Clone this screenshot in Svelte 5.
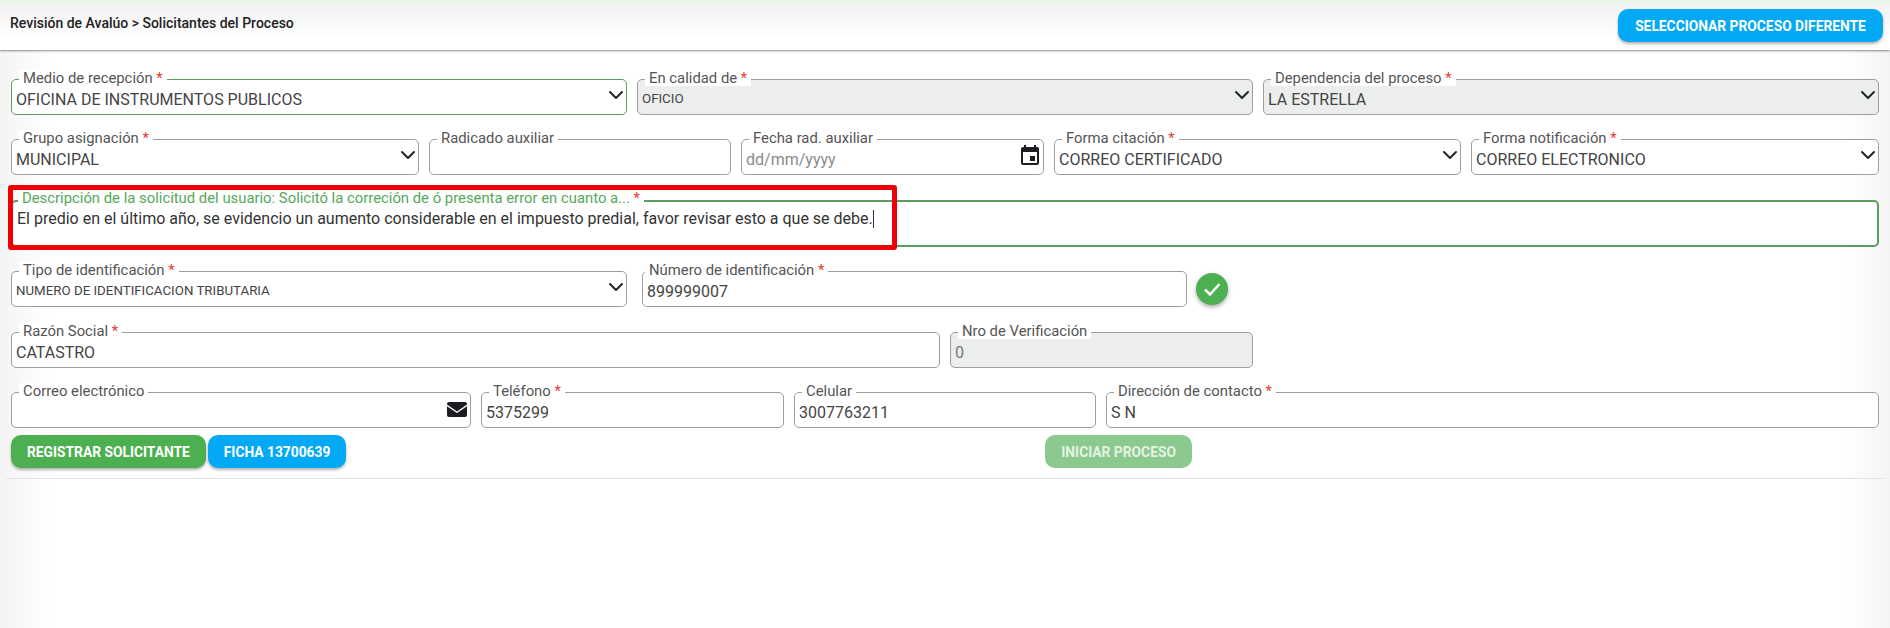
<script>
  const req = '*';
</script>

<div class="page">
  <header class="head">
    <h1>Revisión de Avalúo &gt; Solicitantes del Proceso</h1>
    <button class="btn blue top">SELECCIONAR PROCESO DIFERENTE</button>
  </header>

  <section class="form">
    <div class="row r1">
      <div class="field ok"><span class="lab">Medio de recepción <i>{req}</i></span><span class="val">OFICINA DE INSTRUMENTOS PUBLICOS</span><svg class="chev" viewBox="0 0 16 16"><path d="M2 5l6 6 6-6"/></svg></div>
      <div class="field off"><span class="lab">En calidad de <i>{req}</i></span><span class="val sm">OFICIO</span><svg class="chev" viewBox="0 0 16 16"><path d="M2 5l6 6 6-6"/></svg></div>
      <div class="field off"><span class="lab">Dependencia del proceso <i>{req}</i></span><span class="val">LA ESTRELLA</span><svg class="chev" viewBox="0 0 16 16"><path d="M2 5l6 6 6-6"/></svg></div>
    </div>
    <div class="row r2">
      <div class="field"><span class="lab">Grupo asignación <i>{req}</i></span><span class="val">MUNICIPAL</span><svg class="chev" viewBox="0 0 16 16"><path d="M2 5l6 6 6-6"/></svg></div>
      <div class="field"><span class="lab">Radicado auxiliar</span></div>
      <div class="field"><span class="lab">Fecha rad. auxiliar</span><span class="val ph">dd/mm/yyyy</span>
        <svg class="ico cal" viewBox="0 0 24 24"><path d="M17 12h-5v5h5v-5zM16 1v2H8V1H6v2H5c-1.110 0-1.990.9-1.990 2L3 19c0 1.100.89 2 2 2h14c1.100 0 2-.9 2-2V5c0-1.100-.9-2-2-2h-1V1h-2zm3 18H5V8h14v11z"/></svg></div>
      <div class="field"><span class="lab">Forma citación <i>{req}</i></span><span class="val">CORREO CERTIFICADO</span><svg class="chev" viewBox="0 0 16 16"><path d="M2 5l6 6 6-6"/></svg></div>
      <div class="field"><span class="lab">Forma notificación <i>{req}</i></span><span class="val">CORREO ELECTRONICO</span><svg class="chev" viewBox="0 0 16 16"><path d="M2 5l6 6 6-6"/></svg></div>
    </div>
    <div class="row r3">
      <div class="field ok area"><span class="lab lab-ok">Descripción de la solicitud del usuario: Solicitó la correción de ó presenta error en cuanto a... <i>{req}</i></span><span class="val">El predio en el último año, se evidencio un aumento considerable en el impuesto predial, favor revisar esto a que se debe.<b class="caret"></b></span>
        <div class="redbox"></div>
      </div>
    </div>
    <div class="row r4">
      <div class="field"><span class="lab">Tipo de identificación <i>{req}</i></span><span class="val sm">NUMERO DE IDENTIFICACION TRIBUTARIA</span><svg class="chev" viewBox="0 0 16 16"><path d="M2 5l6 6 6-6"/></svg></div>
      <div class="field"><span class="lab lab-near">Número de identificación <i>{req}</i></span><span class="val">899999007</span></div>
      <div class="check"><svg viewBox="0 0 32 32"><path d="M9 16.500l5 5 9.500-10.500"/></svg></div>
    </div>
    <div class="row r5">
      <div class="field"><span class="lab">Razón Social <i>{req}</i></span><span class="val">CATASTRO</span></div>
      <div class="field off"><span class="lab">Nro de Verificación</span><span class="val dim">0</span></div>
    </div>
    <div class="row r6">
      <div class="field"><span class="lab">Correo electrónico</span>
        <svg class="ico mail" viewBox="0 0 20 15"><path d="M2 0h16a2 2 0 0 1 2 2v.6l-10 6.800L0 2.600V2a2 2 0 0 1 2-2zM0 4.300l10 6.800 10-6.800V13a2 2 0 0 1-2 2H2a2 2 0 0 1-2-2z"/></svg></div>
      <div class="field"><span class="lab">Teléfono <i>{req}</i></span><span class="val">5375299</span></div>
      <div class="field"><span class="lab">Celular</span><span class="val">3007763211</span></div>
      <div class="field"><span class="lab">Dirección de contacto <i>{req}</i></span><span class="val">S N</span></div>
    </div>
    <div class="actions">
      <button class="btn green">REGISTRAR SOLICITANTE</button>
      <button class="btn blue">FICHA 13700639</button>
      <button class="btn start">INICIAR PROCESO</button>
    </div>
  </section>
  <hr />
</div>

<style>
  :global(body) { margin: 0; background: #fff; }
  .page {
    width: 1890px; height: 628px; overflow: hidden; box-sizing: border-box;
    font-family: Roboto, sans-serif; color: #333;
    background: linear-gradient(90deg, #f4f4f4 0, #fff 50px, #fff 1845px, #f4f4f4 100%);
  }
  .head {
    height: 50px; box-sizing: border-box; padding: 7px 7px 0 10px;
    display: flex; justify-content: space-between; align-items: flex-start;
    border-top: 2px solid #e6f4e6;
    background: linear-gradient(180deg, #f1f1f1, #fff 75%);
    box-shadow: 0 1px 2px rgba(0,0,0,.45);
  }
  h1 { margin: 7px 0 0; font-size: 14px; font-weight: 500; line-height: 14px; color: #222; }
  .form { padding: 29px 11px 0; }
  .row { display: grid; column-gap: 10px; margin-bottom: 24px; }
  .r1 { grid-template-columns: repeat(3, 1fr); }
  .r2 { grid-template-columns: 408fr 302fr 303fr 407fr 408fr; margin-bottom: 25px; }
  .r3 { display: block; margin-bottom: 24px; }
  .r4 { grid-template-columns: 616px 545px 32px; column-gap: 15px; margin-bottom: 25px; }
  .r5 { grid-template-columns: 929px 303px; }
  .r6 { grid-template-columns: 460px 303px 302px 773px; margin-bottom: 7px; }
  .field {
    position: relative; height: 36px; box-sizing: border-box;
    border: 1px solid #9e9e9e; border-radius: 5px; background: #fff;
    display: flex; align-items: center;
  }
  .ok { border-color: #5c9c5f; }
  .off { background: #eceeed; }
  .area { height: 47px; border-width: 2px; align-items: flex-start; }
  .lab {
    position: absolute; left: 7px; top: -10px; padding: 0 4px; background: #fff;
    font-size: 14.850px; line-height: 16px; color: #555; white-space: nowrap;
  }
  .lab i { color: #e53935; font-style: normal; }
  .lab-ok { color: #55a85a; top: -11px; left: 5px; line-height: 15px; }
  .lab-near { left: 2px; }
  .val { font-size: 16px; color: #444; padding: 5px 0 0 4px; white-space: nowrap; }
  .area .val { color: #333; padding-top: 7px; }
  .val.sm { font-size: 13.300px; padding-top: 3px; }
  .val.ph { color: #8a8a8a; }
  .val.dim { color: #777; }
  .caret { display: inline-block; width: 1px; height: 18px; background: #333; vertical-align: -4px; }
  .chev { position: absolute; right: 2px; top: 7px; width: 16px; height: 16px; fill: none; stroke: #212529; stroke-width: 2; stroke-linecap: round; stroke-linejoin: round; }
  .ico { position: absolute; fill: #1c1c22; }
  .cal { right: 1px; top: 4px; width: 24px; height: 24px; }
  .mail { right: 3px; top: 9px; width: 20px; height: 15px; }
  .redbox { position: absolute; left: -5px; top: -17px; width: 889px; height: 65px; box-sizing: border-box; border: 5px solid #ee0005; border-radius: 3px; pointer-events: none; }
  .check { width: 32px; height: 32px; border-radius: 50%; background: #4caf50; margin: 2px 0 0 -6px; box-shadow: 0 2px 4px rgba(0,0,0,.35); }
  .check svg { display: block; width: 32px; height: 32px; fill: none; stroke: #fff; stroke-width: 2.500; }
  .actions { display: flex; gap: 2px; }
  .btn {
    border: 0; height: 33px; border-radius: 10px; color: #fff; font: 700 13.800px Roboto, sans-serif;
    padding: 0 16px; box-shadow: 0 2px 3px rgba(0,0,0,.3); white-space: nowrap;
  }
  .blue { background: #03a9f4; }
  .green { background: #4caf50; }
  .start { background: #8bc98e; box-shadow: none; color: #e4f2e5; margin-left: 697px; }
  .top { width: 265px; padding: 0; }
  hr { margin: 10px 6px 0; border: 0; border-top: 1px solid #e2e2e2; }
</style>
